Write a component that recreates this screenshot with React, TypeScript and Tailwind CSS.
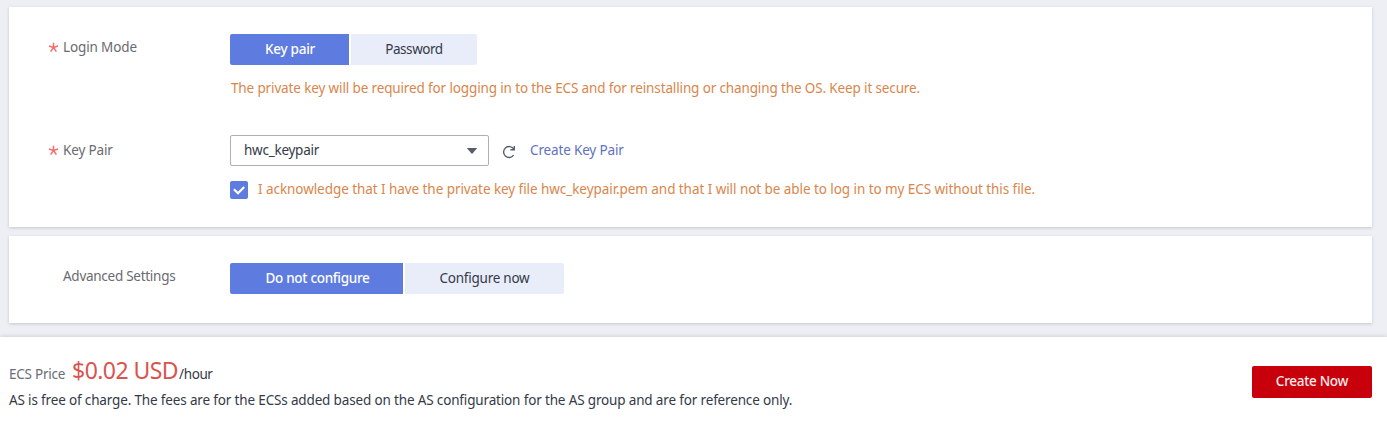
import React from "react";

type SegmentProps = { children: React.ReactNode; className: string };

function Segment({ children, className }: SegmentProps) {
  return (
    <button type="button" className={`flex h-[31px] items-center justify-center whitespace-nowrap pb-[2px] ${className}`}>
      {children}
    </button>
  );
}

function Label({ required = false, children }: { required?: boolean; children: React.ReactNode }) {
  return (
    <div className="flex h-[26px] w-[221px] shrink-0 items-center pl-[39px] text-[#6a6a70]">
      <span className="flex w-[15px] items-center">
        {required && (
          <svg width="11" height="11" viewBox="0 0 11 11" fill="none" stroke="#f66f6f" strokeWidth="1.5" className="mt-px">
            <path d="M5.5 .8v4.7M1 4l4.5 1.5M10 4 5.5 5.5M2.6 9.6l2.9-4.1M8.4 9.6 5.5 5.5" />
          </svg>
        )}
      </span>
      {children}
    </div>
  );
}

export default function App() {
  return (
    <div className="flex h-[423px] w-[1387px] flex-col overflow-hidden bg-[#eeeff5] font-['Noto_Sans',sans-serif] text-[13.5px] leading-[20px] text-[#343a48]">
      <section className="mx-[9px] mt-[7px] mr-[15px] h-[220px] shrink-0 bg-white pt-[27px] shadow-[0_1px_3px_rgba(0,0,0,0.17)]">
        <div className="flex h-[101px]">
          <Label required><span className="tracking-[-0.13px]">Login Mode</span></Label>
          <div>
            <div className="flex gap-[2px]">
              <Segment className="w-[119px] rounded-l-[2px] bg-[#5e7ce0] pl-px font-medium tracking-[-0.25px] text-white">Key pair</Segment>
              <Segment className="w-[126px] rounded-r-[2px] bg-[#e9edfa] tracking-[-0.45px]">Password</Segment>
            </div>
            <p className="mt-[13px] ml-px tracking-[-0.134px] whitespace-nowrap text-[#d9864c]">
              The private key will be required for logging in to the ECS and for reinstalling or changing the OS. Keep it secure.
            </p>
          </div>
        </div>
        <div className="flex">
          <div className="pt-[2px]">
            <Label required><span className="tracking-[-0.15px]">Key Pair</span></Label>
          </div>
          <div>
            <div className="flex items-center">
              <button type="button" className="flex h-[31px] w-[259px] items-center justify-between rounded-[2px] border border-[#adb0b8] pr-[11px] pl-[13px]">
                <span className="-mt-px tracking-[-0.25px]">hwc_keypair</span>
                <svg width="10" height="6" viewBox="0 0 10 6" fill="#575d6c"><path d="M.4 0h9.2q.5 0 .2.5L5.5 5.6q-.5.5-1 0L.2.5Q-.1 0 .4 0z" /></svg>
              </button>
              <svg width="14" height="14" viewBox="0 0 14 14" fill="none" stroke="#575d6c" strokeWidth="1.4" className="mt-[3px] ml-[13px]">
                <path d="M11.8 4.2A5.5 5.5 0 1 0 11.6 10.2M12.3 .9v3.9H8.4" />
              </svg>
              <a className="-mt-px ml-[14px] tracking-[-0.15px] whitespace-nowrap text-[#5f72bf]">Create Key Pair</a>
            </div>
            <div className="mt-[14px] flex items-center">
              <span className="flex size-[18px] items-center justify-center rounded-[2px] bg-[#5e7ce0]">
                <svg width="12" height="10" viewBox="0 0 12 10" fill="none" stroke="#fff" strokeWidth="2.2"><path d="m.9 4.3 4.1 4L11.2 2" /></svg>
              </span>
              <span className="-mt-px ml-[10px] tracking-[-0.063px] whitespace-nowrap text-[#d9864c]">I acknowledge that I have the private key file hwc_keypair.pem and that I will not be able to log in to my ECS without this file.</span>
            </div>
          </div>
        </div>
      </section>

      <section className="mx-[9px] mt-[9px] mr-[15px] flex h-[87px] shrink-0 bg-white pt-[27px] shadow-[0_1px_3px_rgba(0,0,0,0.17)]">
        <Label><span className="tracking-[-0.27px]">Advanced Settings</span></Label>
        <div className="flex gap-[2px]">
          <Segment className="w-[173px] rounded-l-[2px] bg-[#5e7ce0] pl-[2px] font-medium tracking-[-0.3px] text-white">Do not configure</Segment>
          <Segment className="w-[159px] rounded-r-[2px] bg-[#e9edfa] tracking-[-0.25px]">Configure now</Segment>
        </div>
      </section>

      <footer className="mt-[14px] flex h-[86px] shrink-0 justify-between bg-white pr-[15px] pl-[9px] shadow-[0_-1px_4px_rgba(0,0,0,0.12)]">
        <div className="pt-[17px]">
          <div className="flex h-[36px] items-baseline whitespace-nowrap leading-[32px]">
            <span className="tracking-[-0.25px] text-[#6a6d78]">ECS Price</span>
            <span className="ml-[7px] text-[23px] tracking-[-0.55px] text-[#d9544f]">$0.02 USD</span>
            <span className="ml-px tracking-[-0.4px]">/hour</span>
          </div>
          <p className="tracking-[-0.155px] whitespace-nowrap">AS is free of charge. The fees are for the ECSs added based on the AS configuration for the AS group and are for reference only.</p>
        </div>
        <button type="button" className="mt-[29px] h-8 w-[120px] rounded-[2px] bg-[#c7000b] pb-[2px] font-medium tracking-[-0.3px] text-[#ffecec]">Create Now</button>
      </footer>
    </div>
  );
}
